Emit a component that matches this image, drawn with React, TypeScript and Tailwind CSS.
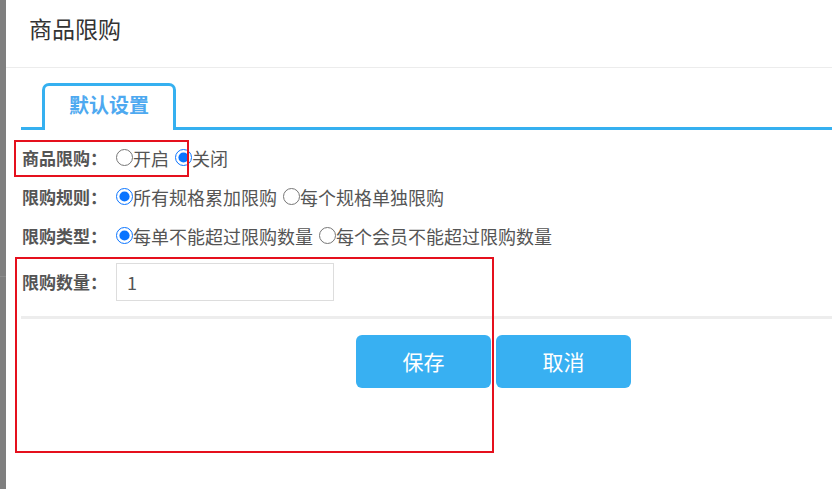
import React from "react";

const font = { fontFamily: '"Noto Sans CJK SC", "Noto Sans", sans-serif' };

type Option = { label: string; checked?: boolean };

function RadioGroup({ name, options }: { name: string; options: Option[] }) {
  return (
    <div className="flex items-center">
      {options.map((opt, i) => (
        <label key={opt.label} className={`flex items-center ${i > 0 ? "ml-[6px]" : ""}`}>
          <input
            type="radio"
            name={name}
            defaultChecked={opt.checked}
            className="m-0 h-[17px] w-[17px] accent-[#0a74ff]"
          />
          <span className="text-[18px] leading-[24px] text-[#555]">{opt.label}</span>
        </label>
      ))}
    </div>
  );
}

function FormRow({ label, children, height = "h-[39px]" }: { label: string; children: React.ReactNode; height?: string }) {
  return (
    <div className={`flex items-center ${height}`}>
      <div className="w-[94px] shrink-0 text-[17px] font-bold leading-[24px] text-[#555]">{label}：</div>
      {children}
    </div>
  );
}

export default function App() {
  return (
    <div className="relative flex h-[489px] overflow-hidden bg-white" style={font}>
      <div className="flex w-[6px] shrink-0 flex-col bg-[#7f7f7f]">
        <div className="h-[276px]" />
        <div className="h-[1px] bg-[#8c8c8c]" />
      </div>

      <div className="flex-1">
        <div className="flex h-[68px] items-center border-b border-[#ececec] pb-[10px] pl-[23px] text-[23px] text-[#333]">
          商品限购
        </div>

        <div className="ml-[15px] mt-[15px] flex border-b-[3px] border-[#35b0f0]">
          <div className="-mb-[3px] ml-[21px] flex h-[47px] w-[134px] items-center justify-center rounded-t-[7px] border-[3px] border-b-0 border-[#35b0f0] bg-white pb-[6px] text-[20px] font-bold text-[#4ea9f0]">
            默认设置
          </div>
        </div>

        <div className="mt-[8px] pl-[16px]">
          <FormRow label="商品限购">
            <RadioGroup name="limit" options={[{ label: "开启" }, { label: "关闭", checked: true }]} />
          </FormRow>
          <FormRow label="限购规则">
            <RadioGroup
              name="rule"
              options={[{ label: "所有规格累加限购", checked: true }, { label: "每个规格单独限购" }]}
            />
          </FormRow>
          <FormRow label="限购类型">
            <RadioGroup
              name="type"
              options={[{ label: "每单不能超过限购数量", checked: true }, { label: "每个会员不能超过限购数量" }]}
            />
          </FormRow>
          <div className="mt-[8px]">
            <FormRow label="限购数量" height="h-[38px]">
              <input
                type="text"
                defaultValue="1"
                className="h-[38px] w-[218px] border border-[#dddddd] bg-white px-[10px] text-[18px] text-[#555] outline-none"
              />
            </FormRow>
          </div>
        </div>

        <div className="ml-[15px] mt-[15px] h-[3px] bg-[#ededed]" />

        <div className="mt-[16px] flex gap-[5px] pl-[350px]">
          <button
            type="button"
            className="h-[53px] w-[135px] rounded-[6px] bg-[#38b0f2] text-[21px] text-white"
          >
            保存
          </button>
          <button
            type="button"
            className="h-[53px] w-[135px] rounded-[6px] bg-[#38b0f2] text-[21px] text-white"
          >
            取消
          </button>
        </div>
      </div>

      <div className="pointer-events-none absolute left-[14px] top-[140px] h-[37px] w-[175px] border-2 border-[#e5101d]" />
      <div className="pointer-events-none absolute left-[15px] top-[257px] h-[196px] w-[479px] border-2 border-[#e5101d]" />
    </div>
  );
}
